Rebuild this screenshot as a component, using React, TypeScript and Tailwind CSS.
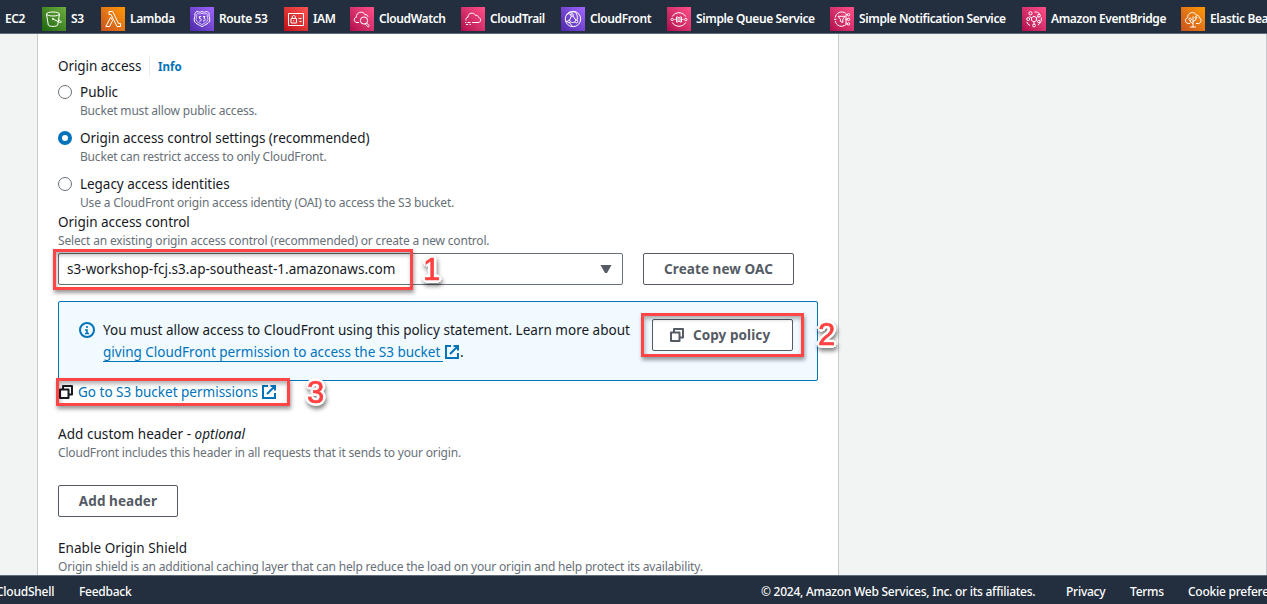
import type { ReactNode } from "react";

type Tone = "green" | "orange" | "purple" | "red" | "pink";

const tones: Record<Tone, string> = {
  green: "bg-linear-to-tr from-[#1b660f] to-[#6cae3e]",
  orange: "bg-linear-to-tr from-[#c8511b] to-[#ff9900]",
  purple: "bg-linear-to-tr from-[#4d27a8] to-[#a166ff]",
  red: "bg-linear-to-tr from-[#bd0816] to-[#ff5252]",
  pink: "bg-linear-to-tr from-[#b0084d] to-[#ff4f8b]",
};

const services: { name: string; tone: Tone; width: string; art: ReactNode }[] = [
  {
    name: "S3",
    tone: "green",
    width: "w-[59px]",
    art: (
      <>
        <ellipse cx="11" cy="7" rx="6.5" ry="2" />
        <path d="M4.5 7.2 6.3 18c.6 1.900 8.800 1.900 9.400 0L17.500 7.200M11 12l6.500 3.300c2 .8 2.500-.6.700-1.600l-1.500-.9" />
        <circle cx="11" cy="12" r=".7" />
      </>
    ),
  },
  {
    name: "Lambda",
    tone: "orange",
    width: "w-[89px]",
    art: <path d="M9.700 10.200 4.800 19.500h3.800l3-6zM8 4.500v3h2l6 12h3.500v-3h-2L11.700 4.500z" />,
  },
  {
    name: "Route 53",
    tone: "purple",
    width: "w-[94px]",
    art: (
      <>
        <path d="M12 4.500c1.800 1 3.500.8 5-.2l2.300 2.300c-1 2 .5 3.700.5 6.200 0 4-4.800 4.600-7.800 6.900-3-2.300-7.800-2.900-7.800-6.900 0-2.500 1.500-4.200.5-6.200L7 4.300c1.500 1 3.200 1.200 5 .2z" />
        <path d="M12 6.300c1.700.8 3.300.8 4.700.2l.7.800c-.6 2 .5 3.500.5 5.300 0 2.700-3.600 3.200-5.900 5-2.300-1.800-5.900-2.300-5.900-5 0-1.800 1.100-3.300.5-5.300l.7-.8c1.400.6 3 .6 4.700-.2z" strokeWidth=".7" />
        <path d="M11.200 9.500H9.300v2c2.600-.6 2.600 3 0 2.600M13 9.500h2l-1.200 1.800c2.200.2 1.800 3-.8 2.700" />
      </>
    ),
  },
  {
    name: "IAM",
    tone: "red",
    width: "w-[66px]",
    art: <path d="M4.500 6.500h15v12h-15zM7 11.500h5.500V16H7zM8.300 11.500V10c0-2 3-2 3 0v1.500M9.750 13.200v1M14.500 11.500h3M15.500 14.500h2" />,
  },
  {
    name: "CloudWatch",
    tone: "pink",
    width: "w-[111px]",
    art: (
      <>
        <path d="M9 15.500H7c-3.600-.3-3.600-4.800-.6-5.300C5.900 5 13.200 3.200 15 7.800c1.800-.6 2.700.4 2.900 2" />
        <circle cx="14" cy="13.500" r="3.600" />
        <path d="m16.700 16 2.600 2.700c-.5 1.200-1.100 1.300-1.700.8l-2.500-2.700" />
      </>
    ),
  },
  {
    name: "CloudTrail",
    tone: "pink",
    width: "w-[100px]",
    art: (
      <path d="M5 13.500c-.5-1.800.3-3 2-3.300C6.800 6 12.700 4.500 14.600 8.500c1.800-.5 2.600.3 2.900 1.900 2.800.6 2.900 5.100-.3 5.100h-6M4 15.500h1.300m1.200 0h3M5 17.500h2m1.500 0h1.300" />
    ),
  },
  {
    name: "CloudFront",
    tone: "purple",
    width: "w-[106px]",
    art: (
      <>
        <circle cx="12" cy="12" r="7.700" />
        <circle cx="11" cy="8" r="1.300" />
        <circle cx="8" cy="14.500" r="1.300" />
        <circle cx="15.500" cy="14.500" r="1.300" />
        <path d="M10.300 9.200 8.500 13.200M12 9l3 4.300M9.300 15c1.500.6 3 .6 4.800 0M5.500 8c2-3 7-3.500 9-2.700 1.500 2 2.500 4.500 1.500 7.800M4.800 14.500l2-.2M8.700 15.800c.8 1.500 1.500 2.500 3 3.500M9.800 7.300 7 6.500" />
      </>
    ),
  },
  {
    name: "Simple Queue Service",
    tone: "pink",
    width: "w-[163px]",
    art: (
      <>
        <path d="M5.300 9.500C8 4.500 16 4.500 18.700 9.500M5.300 15.500c2.700 5 10.700 5 13.400 0" />
        <circle cx="5.200" cy="12.500" r="1.200" />
        <circle cx="18.800" cy="12.500" r="1.200" />
        <path d="M7.500 12.500h1.200M15.300 12.500h1.200M9.500 10h1.200c.8.8 1.800.8 2.600 0h1.200v5h-1.200c-.8-.8-1.800-.8-2.600 0H9.500zM11 10.500v4M13 10.500v4" />
      </>
    ),
  },
  {
    name: "Simple Notification Service",
    tone: "pink",
    width: "w-[192px]",
    art: (
      <>
        <path d="M16 6.500C11 3 6 6 5.300 10.500M5.300 14C6 19 12 21 16 17.500M4 12.300h2.500M8 9.300h7l-2.200 3v3.200l-2.400-1v-2.200zM15.500 12.300h2M17.500 7.500h-1.500v9.500h1.500" />
        <circle cx="18.500" cy="7.700" r="1.200" />
        <circle cx="18.500" cy="12.300" r="1.200" />
        <circle cx="18.500" cy="16.900" r="1.200" />
      </>
    ),
  },
  {
    name: "Amazon EventBridge",
    tone: "pink",
    width: "w-[159px]",
    art: (
      <>
        <path d="m12 9.300 2.500 1.400v2.800L12 15l-2.500-1.500v-2.800zM14.500 10.700l1.700-1.500M12 15v2.500M9.500 10.700 7.500 9.500M12.500 5h2c1.500.4 2.500 1 3.500 2.300M19.300 10.500v3l-1.500 3-2 1.500M8 18.500l-2-1.300-1.200-2.400" />
        <circle cx="8.500" cy="6.300" r="1.600" />
        <circle cx="17" cy="8.700" r="1.400" />
        <circle cx="6.200" cy="12" r="1.500" />
        <circle cx="12" cy="18.500" r="1.400" />
        <circle cx="16.800" cy="14.500" r="1.200" />
      </>
    ),
  },
  {
    name: "Elastic Beanstalk",
    tone: "orange",
    width: "w-[150px]",
    art: (
      <>
        <path d="M9 16.500H7.500c-4-.3-4-5-.8-5.800C6.300 5.300 13.500 3.500 15.300 8.300c1.900-.4 2.700.4 2.900 2.400 2.800.8 2.300 5.600-.7 5.800H15M12 9.500v10.500M9 20h6M12 16.500 9.500 15v-1.500M12 14.500l2.700-1.500v-1.500" />
        <circle cx="9.200" cy="12.300" r="1.200" />
        <circle cx="14.900" cy="10.500" r="1" />
      </>
    ),
  },
];

const hintText = "text-xs leading-4 tracking-[-0.18px] text-[#687078]";
const buttonText = "text-[13.500px] font-bold tracking-[0.08px] text-[#545b64]";

function ExternalIcon() {
  return (
    <svg className="h-4 w-4 shrink-0" viewBox="0 0 16 16" fill="none" stroke="#0073bb" strokeWidth="2">
      <path d="M7 2H2v12h12V9M9.500 2H14v4.500M6 10l7.500-7.500" />
    </svg>
  );
}

function CopyIcon({ color }: { color: string }) {
  return (
    <svg className="h-4 w-4 shrink-0" viewBox="0 0 16 16" fill="none" stroke={color} strokeWidth="2" strokeLinejoin="round">
      <path d="M2 5.500h8.500V14H2zM5 5.500V2h9v8.500h-3.500" />
    </svg>
  );
}

function Option({ label, hint, checked }: { label: string; hint: string; checked?: boolean }) {
  return (
    <div className="mb-2 flex gap-2">
      <span
        className={
          checked
            ? "mt-1 h-3.5 w-3.5 shrink-0 rounded-full border-[4.5px] border-[#0073bb] bg-white"
            : "mt-1 h-3.5 w-3.5 shrink-0 rounded-full border border-[#687078] bg-white"
        }
      />
      <div>
        <div className="leading-[22px] tracking-[-0.04px]">{label}</div>
        <div className={hintText}>{hint}</div>
      </div>
    </div>
  );
}

function Marker({ n, place }: { n: string; place: string }) {
  return (
    <span
      className={`absolute text-[31px] leading-8 text-[#ff4040] drop-shadow-[1px_3px_2px_rgba(0,0,0,0.5)] [-webkit-text-stroke:0.700px_#ff4040] [font-family:'Liberation_Sans',sans-serif] [text-shadow:3px_0_white,-3px_0_white,0_3px_white,0_-3px_white,2px_2px_white,-2px_2px_white,2px_-2px_white,-2px_-2px_white] ${place}`}
    >
      {n}
    </span>
  );
}

function Highlight({ place }: { place: string }) {
  return (
    <div
      className={`absolute border-3 border-[#ff4545] shadow-[1px_3px_4px_rgba(0,0,0,0.4),inset_1px_3px_4px_rgba(0,0,0,0.3)] ${place}`}
    />
  );
}

export default function App() {
  return (
    <div className="relative flex h-[604px] w-[1267px] flex-col overflow-hidden bg-[#f2f3f3] text-[13.500px] whitespace-nowrap text-[#16191f] [font-family:'Noto_Sans',sans-serif]">
      <header className="flex h-[34px] shrink-0 items-center border-b border-[#5f6b7a] bg-[#232f3e] pt-[5px] text-xs font-semibold tracking-[-0.38px] text-white">
        <span className="w-[42px] shrink-0 pl-[5px]">EC2</span>
        {services.map((s) => (
          <div key={s.name} className={`flex shrink-0 items-center gap-[5px] ${s.width}`}>
            <span className={`h-6 w-6 shrink-0 ${tones[s.tone]}`}>
              <svg viewBox="0 0 24 24" className="h-6 w-6" fill="none" stroke="white" strokeWidth="1">
                {s.art}
              </svg>
            </span>
            <span>{s.name}</span>
          </div>
        ))}
      </header>

      <div className="flex h-[541px] shrink-0 border-r border-[#c5cbcb] pl-[37px]">
        <main className="flex w-[802px] flex-col overflow-hidden border-x border-[#c5cbcb] bg-white pt-[21px] pr-5 pl-5">
          <div className="mb-1 flex h-[22px] items-center">
            <span className="w-[91px] tracking-[-0.08px]">Origin access</span>
            <span className="flex h-[22px] items-center border-l border-[#eaeded] pt-px pl-2 text-[11.500px] font-bold text-[#0073bb]">Info</span>
          </div>

          <Option label="Public" hint="Bucket must allow public access." />
          <Option checked label="Origin access control settings (recommended)" hint="Bucket can restrict access to only CloudFront." />
          <Option label="Legacy access identities" hint="Use a CloudFront origin access identity (OAI) to access the S3 bucket." />

          <div className="-mt-2 leading-[22px] tracking-[-0.04px]">Origin access control</div>
          <div className={hintText}>Select an existing origin access control (recommended) or create a new control.</div>

          <div className="mt-1 flex h-8 gap-5">
            <div className="flex w-[565px] items-center justify-between rounded-xs border border-[#687078] pr-[10px] pl-2">
              <span className="tracking-[0.04px]">s3-workshop-fcj.s3.ap-southeast-1.amazonaws.com</span>
              <svg className="h-3 w-3" viewBox="0 0 12 12" fill="#545b64">
                <path d="M.5 2h11L7 10H5z" />
              </svg>
            </div>
            <button className={`w-[151px] rounded-xs border border-[#545b64] ${buttonText}`}>Create new OAC</button>
          </div>

          <div className="mt-4 flex h-20 shrink-0 rounded-xs border border-[#0073bb] bg-[#f1faff] pt-[17px] pl-5">
            <svg className="mt-[3px] h-4 w-4 shrink-0" viewBox="0 0 16 16" fill="none" stroke="#0073bb" strokeWidth="2">
              <circle cx="8" cy="8" r="7" />
              <path d="M8 4v2M6 8h2v3.500M6 11.500h4" strokeWidth="1.600" />
            </svg>
            <div className="ml-2 w-[549px] leading-[22px]">
              <div className="tracking-[0.01px]">You must allow access to CloudFront using this policy statement. Learn more about</div>
              <div className="flex items-center">
                <a className="mr-[1px] h-[20px] w-[340px] border-b border-[#0073bb] leading-[20px] text-[#0073bb]">
                  giving CloudFront permission to access the S3 bucket
                </a>
                <ExternalIcon />.
              </div>
            </div>
            <button className={`flex h-8 w-[141px] items-center gap-2 rounded-xs border border-[#545b64] bg-white pl-4 ${buttonText}`}>
              <CopyIcon color="#545b64" />
              Copy policy
            </button>
          </div>

          <div className="flex h-[22px] items-center text-[#0073bb]">
            <CopyIcon color="#16191f" />
            <span className="ml-1 w-[183px]">Go to S3 bucket permissions</span>
            <ExternalIcon />
          </div>

          <div className="mt-5 leading-[22px] tracking-[0.05px]">
            Add custom header - <i>optional</i>
          </div>
          <div className={hintText}>CloudFront includes this header in all requests that it sends to your origin.</div>
          <button className={`mt-6 h-8 w-[120px] shrink-0 rounded-xs border border-[#545b64] ${buttonText}`}>Add header</button>

          <div className="mt-5 leading-[22px] tracking-[0.05px]">Enable Origin Shield</div>
          <div className={hintText}>
            Origin shield is an additional caching layer that can help reduce the load on your origin and help protect its availability.
          </div>
        </main>
      </div>

      <footer className="flex h-[29px] shrink-0 items-center border-t border-[#5f6b7a] bg-[#232f3e] pt-[3px] text-xs font-medium tracking-[-0.25px] text-white">
        <span className="-ml-[4px] w-[83px] shrink-0">CloudShell</span>
        <span className="w-[682px] shrink-0">Feedback</span>
        <span className="w-[305px] shrink-0">© 2024, Amazon Web Services, Inc. or its affiliates.</span>
        <span className="w-[64px] shrink-0">Privacy</span>
        <span className="w-[58px] shrink-0">Terms</span>
        <span className="shrink-0">Cookie preferences</span>
      </footer>

      <Highlight place="left-[53px] top-[249px] h-[41px] w-[360px]" />
      <Highlight place="left-[641px] top-[313px] h-[44px] w-[163px]" />
      <Highlight place="left-[56px] top-[378px] h-[28px] w-[234px]" />
      <Marker n="1" place="left-[423px] top-[254px]" />
      <Marker n="2" place="left-[818px] top-[319px]" />
      <Marker n="3" place="left-[307px] top-[377px]" />
    </div>
  );
}
